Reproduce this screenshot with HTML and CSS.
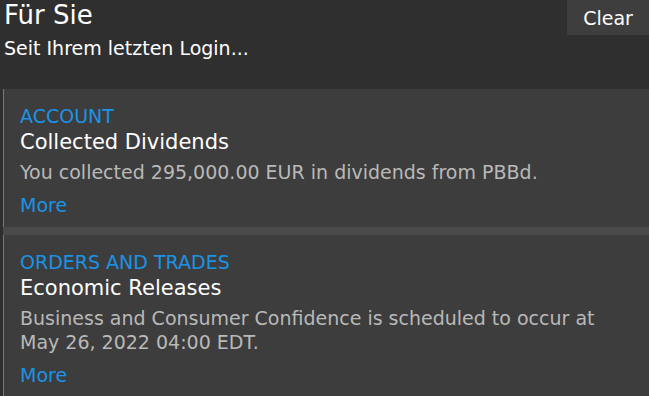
FILE: index.html
```html
<!DOCTYPE html>
<html>
  <head>
    <meta charset="utf-8">
    <meta name="viewport" content="width=device-width">
    <title>Für Sie</title>
    <link rel="stylesheet" href="styles.css">
  </head>
  <body>
    <header class="feed-header">
      <div class="feed-titles">
        <h1>Für Sie</h1>
        <p class="feed-sub">Seit Ihrem letzten Login...</p>
      </div>
      <button class="clear-button">Clear</button>
    </header>
    <main class="feed-list">
      <div class="feed-item">
        <div class="feed-category">ACCOUNT</div>
        <h2>Collected Dividends</h2>
        <p class="feed-text">You collected 295,000.00 EUR in dividends from PBBd.</p>
        <a class="feed-more" href="#">More</a>
      </div>
      <div class="feed-divider"></div>
      <div class="feed-item">
        <div class="feed-category">ORDERS AND TRADES</div>
        <h2>Economic Releases</h2>
        <p class="feed-text">Business and Consumer Confidence is scheduled to occur at May 26, 2022 04:00 EDT.</p>
        <a class="feed-more" href="#">More</a>
      </div>
    </main>
  </body>
</html>
```

FILE: styles.css
```css
* {
  margin: 0;
  box-sizing: border-box;
}
body {
  background-color: #2f2f2f;
  color: white;
  font-family: "DejaVu Sans", Verdana, sans-serif;
  overflow: hidden;
}
.feed-header {
  display: flex;
  justify-content: space-between;
  align-items: flex-start;
  height: 89px;
}
.feed-titles {
  padding-left: 4px;
}
h1 {
  font-size: 26px;
  font-weight: 400;
  line-height: 30px;
}
.feed-sub {
  font-size: 19px;
  line-height: 36px;
}
.clear-button {
  width: 82px;
  height: 35px;
  border: none;
  background: #3e3e3e;
  color: white;
  font-family: inherit;
  font-size: 19px;
  padding: 0;
}
.feed-list {
  padding-left: 3px;
}
.feed-item {
  background-color: #3d3d3d;
  border-left: 1px solid #1a93e6;
  padding: 16px 30px 10px 16px;
}
.feed-divider {
  height: 8px;
  background-color: #4a4a4a;
}
.feed-category {
  color: #1a93e6;
  font-size: 19px;
  line-height: 23px;
}
h2 {
  font-size: 21px;
  font-weight: 400;
  line-height: 28px;
}
.feed-text {
  color: #b9b9b9;
  font-size: 19px;
  line-height: 24px;
  margin-top: 4px;
}
.feed-more {
  display: block;
  color: #1a93e6;
  font-size: 19px;
  line-height: 24px;
  margin-top: 9px;
  text-decoration: none;
}
```
